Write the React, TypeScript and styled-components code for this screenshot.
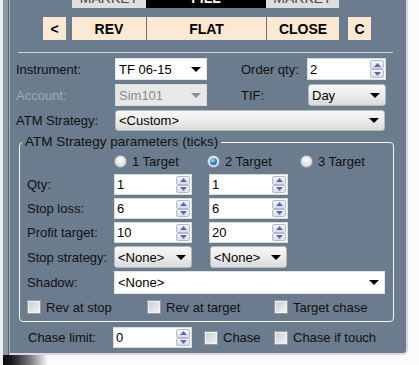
import styled, { createGlobalStyle } from "styled-components";

const PANEL = "#6b7c8e";
const INK = "#101010";

const GlobalStyle = createGlobalStyle`
  html, body {
    margin: 0;
    padding: 0;
    background: #fafafa;
  }
  body {
    font-family: "Liberation Sans", Arial, sans-serif;
    font-size: 13px;
  }
`;

type ComboKind = "white" | "raised" | "disabled";

const DownArrow = ({ color = "#000" }: { color?: string }) => (
  <svg width="10" height="5" viewBox="0 0 10 5">
    <path d="M0 0h10L5 5z" fill={color} />
  </svg>
);

const SpinArrow = ({ up }: { up?: boolean }) => (
  <svg width="7" height="4" viewBox="0 0 7 4">
    <path d={up ? "M0 4h7L3.5 0z" : "M0 0h7L3.5 4z"} fill="#6065b4" />
  </svg>
);

const Combo = ({ value, width, kind }: { value: string; width: number; kind: ComboKind }) => (
  <StyledCombo $w={width} $kind={kind}>
    <span>{value}</span>
    <DownArrow color={kind === "disabled" ? "#8d8d8d" : "#000"} />
  </StyledCombo>
);

const Spin = ({ value, width }: { value: string; width: number }) => (
  <StyledSpin $w={width}>
    <StyledSpinValue>{value}</StyledSpinValue>
    <StyledSpinButtons>
      <StyledSpinHalf>
        <SpinArrow up />
      </StyledSpinHalf>
      <StyledSpinHalf>
        <SpinArrow />
      </StyledSpinHalf>
    </StyledSpinButtons>
  </StyledSpin>
);

const Radio = ({ label, on }: { label: string; on?: boolean }) => (
  <StyledRadioItem>
    <StyledRadioDot $on={on} />
    {label}
  </StyledRadioItem>
);

const Check = ({ label, width }: { label: string; width?: number }) => (
  <StyledCheckItem $w={width}>
    <StyledCheckBox />
    {label}
  </StyledCheckItem>
);

const App = () => (
  <>
    <GlobalStyle />
    <StyledFrame>
      <StyledBody>
        <StyledLeftEdge />
        <StyledPanel>
          <StyledTopRow>
            <StyledTopButton $w={74}>
              <span>MARKET</span>
            </StyledTopButton>
            <StyledTopButton $w={120} $dark>
              <span>FILL</span>
            </StyledTopButton>
            <StyledTopButton $w={73}>
              <span>MARKET</span>
            </StyledTopButton>
          </StyledTopRow>

          <StyledButtonRow>
            <StyledActionButton $w={23}>&lt;</StyledActionButton>
            <StyledActionGroup>
              <StyledActionButton $w={74}>REV</StyledActionButton>
              <StyledActionButton $w={120} $divided>
                FLAT
              </StyledActionButton>
              <StyledActionButton $w={73} $divided>
                CLOSE
              </StyledActionButton>
            </StyledActionGroup>
            <StyledActionButton $w={23}>C</StyledActionButton>
          </StyledButtonRow>

          <StyledSeparator />

          <StyledOuterRow $top={5}>
            <StyledLabel $w={99}>Instrument:</StyledLabel>
            <Combo value="TF 06-15" width={92} kind="white" />
            <StyledLabel $w={66} $gap={34}>
              Order qty:
            </StyledLabel>
            <Spin value="2" width={79} />
          </StyledOuterRow>

          <StyledOuterRow $top={4}>
            <StyledLabel $w={99} $muted>
              Account:
            </StyledLabel>
            <Combo value="Sim101" width={92} kind="disabled" />
            <StyledLabel $w={67} $gap={34}>
              TIF:
            </StyledLabel>
            <Combo value="Day" width={78} kind="raised" />
          </StyledOuterRow>

          <StyledOuterRow $top={4} $h={21}>
            <StyledLabel $w={99}>ATM Strategy:</StyledLabel>
            <Combo value="<Custom>" width={270} kind="raised" />
          </StyledOuterRow>

          <StyledGroup>
            <StyledLegend>ATM Strategy parameters (ticks)</StyledLegend>

            <StyledRadioRow>
              <Radio label="1 Target" />
              <Radio label="2 Target" on />
              <Radio label="3 Target" />
            </StyledRadioRow>

            <StyledInnerRow $top={5}>
              <StyledLabel $w={87}>Qty:</StyledLabel>
              <Spin value="1" width={78} />
              <StyledSecond $gap={17}>
                <Spin value="1" width={79} />
              </StyledSecond>
            </StyledInnerRow>

            <StyledInnerRow $top={3}>
              <StyledLabel $w={87}>Stop loss:</StyledLabel>
              <Spin value="6" width={78} />
              <StyledSecond $gap={17}>
                <Spin value="6" width={79} />
              </StyledSecond>
            </StyledInnerRow>

            <StyledInnerRow $top={3}>
              <StyledLabel $w={87}>Profit target:</StyledLabel>
              <Spin value="10" width={78} />
              <StyledSecond $gap={17}>
                <Spin value="20" width={79} />
              </StyledSecond>
            </StyledInnerRow>

            <StyledInnerRow $top={3} $h={22}>
              <StyledLabel $w={87}>Stop strategy:</StyledLabel>
              <Combo value="<None>" width={78} kind="raised" />
              <StyledSecond $gap={18}>
                <Combo value="<None>" width={77} kind="raised" />
              </StyledSecond>
            </StyledInnerRow>

            <StyledInnerRow $top={3} $h={23}>
              <StyledLabel $w={87}>Shadow:</StyledLabel>
              <Combo value="<None>" width={271} kind="white" />
            </StyledInnerRow>

            <StyledCheckRow>
              <Check label="Rev at stop" width={120} />
              <Check label="Rev at target" width={127} />
              <Check label="Target chase" />
            </StyledCheckRow>
          </StyledGroup>

          <StyledChaseRow>
            <StyledLabel $w={85}>Chase limit:</StyledLabel>
            <Spin value="0" width={79} />
            <StyledSecond $gap={12}>
              <Check label="Chase" width={70} />
              <Check label="Chase if touch" />
            </StyledSecond>
          </StyledChaseRow>
        </StyledPanel>
      </StyledBody>
      <StyledBottomShade />
    </StyledFrame>
  </>
);

const StyledFrame = styled.div`
  width: 419px;
  height: 365px;
  display: flex;
  flex-direction: column;
  overflow: hidden;
  background: #fbfbfb;
`;

const StyledBody = styled.div`
  display: flex;
  height: 355px;
  flex: none;
`;

const StyledLeftEdge = styled.div`
  width: 9px;
  flex: none;
  background: linear-gradient(
    to right,
    #eceef0 0 3px,
    #8a97a4 3px 8px,
    #56636f 8px 9px
  );
`;

const StyledPanel = styled.div`
  width: 399px;
  flex: none;
  box-sizing: border-box;
  display: flex;
  flex-direction: column;
  background: ${PANEL};
  border-left: 1px solid #a9b4be;
  border-right: 2px solid #d5dadf;
  border-bottom: 2px solid #d5dadf;
  border-bottom-right-radius: 5px;
  color: ${INK};
`;

const StyledBottomShade = styled.div`
  height: 10px;
  background: linear-gradient(
    to right,
    #eeeeee 0 3px,
    #0b0b0b 3px,
    #1a1a1a 12px,
    #7a7a7a 30px,
    rgba(255, 255, 255, 0) 48px
  );
`;

const StyledTopRow = styled.div`
  display: flex;
  height: 8px;
  margin-left: 62px;
`;

const StyledTopButton = styled.div<{ $w: number; $dark?: boolean }>`
  width: ${(p) => p.$w}px;
  height: 8px;
  overflow: hidden;
  display: flex;
  align-items: flex-end;
  justify-content: center;
  background: ${(p) => (p.$dark ? "#000" : "#dedede")};
  color: ${(p) => (p.$dark ? "#fff" : "#4a4a4a")};
  font-size: 14px;
  font-weight: ${(p) => (p.$dark ? 700 : 400)};

  > span {
    line-height: 14px;
    margin-bottom: 3px;
    flex: none;
  }
`;

const StyledButtonRow = styled.div`
  display: flex;
  gap: 6px;
  height: 23px;
  margin: 9px 0 0 33px;

  > :last-child {
    margin-left: 3px;
  }
`;

const StyledActionGroup = styled.div`
  display: flex;
`;

const StyledActionButton = styled.div<{ $w: number; $divided?: boolean }>`
  width: ${(p) => p.$w}px;
  box-sizing: border-box;
  display: flex;
  align-items: center;
  justify-content: center;
  background: #fce9d3;
  border-left: ${(p) => (p.$divided ? "1px solid #7b6f66" : "none")};
  color: #000;
  font-size: 14px;
  font-weight: 700;
`;

const StyledSeparator = styled.div`
  width: 375px;
  height: 1px;
  margin: 12px 0 0 8px;
  background: #cdd5dc;
`;

const StyledOuterRow = styled.div<{ $top: number; $h?: number }>`
  display: flex;
  align-items: center;
  height: ${(p) => p.$h ?? 22}px;
  margin-top: ${(p) => p.$top}px;
  padding-left: 6px;
`;

const StyledInnerRow = styled.div<{ $top: number; $h?: number }>`
  display: flex;
  align-items: center;
  height: ${(p) => p.$h ?? 21}px;
  margin-top: ${(p) => p.$top}px;
  padding-left: 7px;
`;

const StyledChaseRow = styled.div`
  display: flex;
  align-items: center;
  height: 21px;
  margin-top: 5px;
  padding-left: 18px;
`;

const StyledSecond = styled.div<{ $gap: number }>`
  display: flex;
  align-items: center;
  height: 100%;
  margin-left: ${(p) => p.$gap}px;
`;

const StyledLabel = styled.span<{ $w: number; $gap?: number; $muted?: boolean }>`
  width: ${(p) => p.$w}px;
  flex: none;
  margin-left: ${(p) => p.$gap ?? 0}px;
  color: ${(p) => (p.$muted ? "#a2abb4" : INK)};
  white-space: nowrap;
`;

const StyledCombo = styled.div<{ $w: number; $kind: ComboKind }>`
  width: ${(p) => p.$w}px;
  height: 100%;
  flex: none;
  box-sizing: border-box;
  display: flex;
  align-items: center;
  justify-content: space-between;
  padding: 0 5px 0 3px;
  color: ${(p) => (p.$kind === "disabled" ? "#8a8a8a" : "#000")};
  background: ${(p) =>
    p.$kind === "raised"
      ? "linear-gradient(#f7f7f7, #ececec 50%, #dadada)"
      : p.$kind === "disabled"
        ? "#e8e8e8"
        : "#fff"};
  border: 1px solid
    ${(p) => (p.$kind === "raised" ? "#b4b9bf" : p.$kind === "disabled" ? "#d9dde1" : "#e2e6ea")};
  border-radius: ${(p) => (p.$kind === "raised" ? "3px" : "0")};
  white-space: nowrap;
`;

const StyledSpin = styled.div<{ $w: number }>`
  width: ${(p) => p.$w}px;
  height: 100%;
  flex: none;
  box-sizing: border-box;
  display: flex;
  background: #fff;
  border: 1px solid #d6dce2;
`;

const StyledSpinValue = styled.span`
  flex: 1;
  display: flex;
  align-items: center;
  padding-left: 2px;
  color: #000;
`;

const StyledSpinButtons = styled.div`
  width: 14px;
  display: flex;
  flex-direction: column;
  padding: 1px 1px 1px 0;
`;

const StyledSpinHalf = styled.div`
  flex: 1;
  display: flex;
  align-items: center;
  justify-content: center;
  background: linear-gradient(#f6f8fb, #d7dee9);
  border: 1px solid #b2bbca;
  border-radius: 2px;
`;

const StyledGroup = styled.fieldset`
  width: 375px;
  min-width: 0;
  box-sizing: border-box;
  margin: 3px 0 0 9px;
  padding: 0 0 7px 0;
  border: 1px solid #f3f5f7;
  border-radius: 4px;
`;

const StyledLegend = styled.legend`
  margin-left: 2px;
  padding: 0 3px;
  line-height: 16px;
  font-size: 13.5px;
  color: ${INK};
`;

const StyledRadioRow = styled.div`
  display: flex;
  height: 16px;
  margin-top: 3px;
  padding-left: 94px;
`;

const StyledRadioItem = styled.div`
  width: 96px;
  display: flex;
  align-items: center;
  gap: 5px;
  white-space: nowrap;
`;

const StyledRadioDot = styled.span<{ $on?: boolean }>`
  width: 13px;
  height: 13px;
  flex: none;
  box-sizing: border-box;
  border-radius: 50%;
  border: 1px solid #979ca1;
  background: radial-gradient(circle at 50% 40%, #ffffff, #d2d5d8 80%);
  display: flex;
  align-items: center;
  justify-content: center;

  &::after {
    content: "";
    display: ${(p) => (p.$on ? "block" : "none")};
    width: 7px;
    height: 7px;
    border-radius: 50%;
    background: radial-gradient(circle at 40% 35%, #a8e6ff, #1f7cc0 55%, #0b4a7e);
  }
`;

const StyledCheckRow = styled.div`
  display: flex;
  height: 14px;
  margin-top: 6px;
  padding-left: 7px;
`;

const StyledCheckItem = styled.div<{ $w?: number }>`
  width: ${(p) => (p.$w ? `${p.$w}px` : "auto")};
  flex: none;
  display: flex;
  align-items: center;
  gap: 5px;
  white-space: nowrap;
`;

const StyledCheckBox = styled.span`
  width: 14px;
  height: 14px;
  flex: none;
  box-sizing: border-box;
  border: 1px solid #979b9f;
  box-shadow: inset 0 0 0 1px #f2f2f2;
  background: linear-gradient(135deg, #c9ccd0, #f4f4f4);
`;

export default App;
